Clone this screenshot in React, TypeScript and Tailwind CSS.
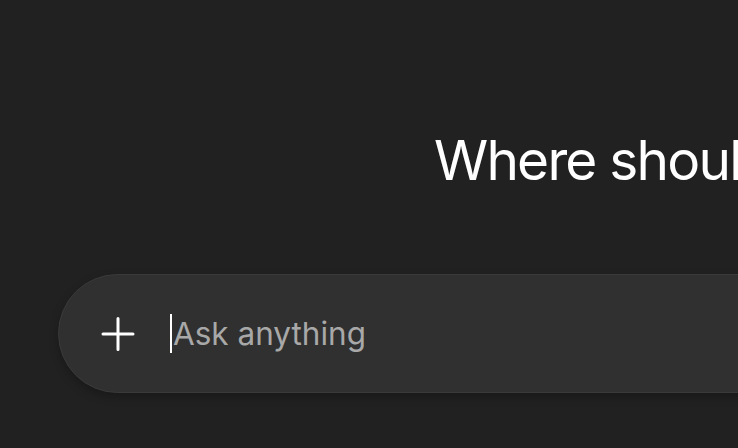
import React from "react";

export default function App() {
  return (
    <div
      className="w-[738px] h-[448px] overflow-hidden bg-[#212121] flex flex-col"
      style={{ fontFamily: "Inter, 'Noto Sans', sans-serif" }}
    >
      <div className="pt-[126px] pl-[434px] whitespace-nowrap">
        <h1 className="text-[55px] leading-[68px] font-normal text-white tracking-[-1.8px]">
          Where should we begin?
        </h1>
      </div>
      <div className="mt-[80px] ml-[58px] w-[900px] shrink-0">
        <div className="h-[119px] rounded-full bg-[#303030] border border-[#3a3a3a] shadow-[0_4px_10px_rgba(0,0,0,0.25)] flex items-center pl-[42px]">
          <svg width="34" height="34" viewBox="0 0 34 34" className="shrink-0">
            <path d="M17 1.5V32.5M2 17H32" stroke="#ffffff" strokeWidth="3" strokeLinecap="round" />
          </svg>
          <div className="ml-[35px] w-[2px] h-[39px] bg-white shrink-0" />
          <span className="ml-[1px] text-[31.5px] text-[#a8a8a8] whitespace-nowrap">Ask anything</span>
        </div>
      </div>
    </div>
  );
}
